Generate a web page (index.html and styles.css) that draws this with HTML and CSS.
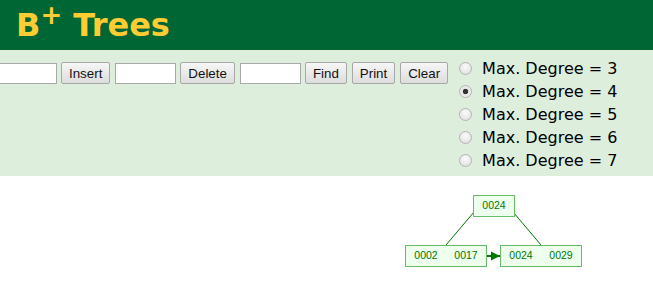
FILE: index.html
```html
<!doctype html>
<html lang="en">
<head>
	<meta charset="UTF-8">
	<title>B+ Trees</title>
	<link rel="stylesheet" href="styles.css">
</head>
<body>
<div class="header">
	<h1>B<sup>+</sup> Trees</h1>
</div>
<div class="panel">
	<div class="controls">
		<input type="text" class="field first">
		<button>Insert</button>
		<input type="text" class="field">
		<button>Delete</button>
		<input type="text" class="field">
		<button>Find</button>
		<button>Print</button>
		<button>Clear</button>
	</div>
	<div class="degrees">
		<label class="deg"><input type="radio" name="deg">Max. Degree = 3</label>
		<label class="deg"><input type="radio" name="deg" checked>Max. Degree = 4</label>
		<label class="deg"><input type="radio" name="deg">Max. Degree = 5</label>
		<label class="deg"><input type="radio" name="deg">Max. Degree = 6</label>
		<label class="deg"><input type="radio" name="deg">Max. Degree = 7</label>
	</div>
</div>
<div class="canvas">
	<svg class="tree" width="653" height="128" viewBox="0 176 653 128">
		<defs>
			<marker id="arrow" markerWidth="9" markerHeight="10" refX="9" refY="5" orient="auto" markerUnits="userSpaceOnUse">
				<path d="M0,0.5 L9,5 L0,9.5 z" fill="#007700"></path>
			</marker>
		</defs>
		<line class="edge" x1="474" y1="212" x2="446" y2="245"></line>
		<line class="edge" x1="508" y1="206" x2="541" y2="245"></line>
		<line class="edge link" x1="481" y1="256" x2="500" y2="256" marker-end="url(#arrow)"></line>

		<rect class="node" x="473.5" y="195.5" width="41" height="21"></rect>
		<text class="key" x="494" y="209">0024</text>

		<rect class="node" x="405.5" y="245.5" width="81" height="21"></rect>
		<text class="key" x="426" y="259">0002</text>
		<text class="key" x="466" y="259">0017</text>

		<rect class="node" x="500.5" y="245.5" width="81" height="21"></rect>
		<text class="key" x="521" y="259">0024</text>
		<text class="key" x="561" y="259">0029</text>
	</svg>
</div>
</body>
</html>
```

FILE: styles.css
```css
body
{
	margin: 0;
	font-family: "DejaVu Sans", Verdana, sans-serif;
	overflow: hidden;
}

.header
{
	height: 50px;
	background-color: #006633;
	display: flex;
	align-items: center;
	padding-left: 16px;
}

h1
{
	margin: 0;
	color: #ffcc33;
	font-size: 32px;
	font-weight: bold;
	line-height: 1;
}

h1 sup
{
	font-size: 26px;
	line-height: 0;
}

.panel
{
	height: 126px;
	background-color: #ddeedd;
	display: flex;
	align-items: flex-start;
}

.controls
{
	display: flex;
	align-items: center;
	gap: 4px;
	margin-top: 12px;
}

.field
{
	width: 61px;
	height: 21px;
	box-sizing: border-box;
	border: 1px solid #a9a9a9;
	background: #ffffff;
	margin: 0;
	padding: 1px 2px;
}

.field.first
{
	margin-left: -4px;
}

.controls button
{
	height: 22px;
	margin: 0 1px 0 0;
	padding: 0 7px;
	font-family: "Liberation Sans", Arial, sans-serif;
	font-size: 13.33px;
	color: #111111;
	border: 1px solid #a8a8a8;
	border-radius: 2px;
	background: linear-gradient(#f6f6f6, #dddddd);
}

.degrees
{
	display: flex;
	flex-direction: column;
	margin-left: 5px;
	padding-top: 7px;
}

.deg
{
	display: flex;
	align-items: center;
	height: 23px;
	font-size: 16px;
	color: #000000;
}

.deg input
{
	appearance: none;
	-webkit-appearance: none;
	width: 13px;
	height: 13px;
	margin: 0 10px 0 5px;
	border: 1px solid #b4b4b4;
	border-radius: 50%;
	background: radial-gradient(circle at 50% 35%, #fbfbfb, #dcdcdc);
	box-sizing: border-box;
}

.deg input:checked
{
	background: radial-gradient(circle, #333333 0, #333333 2.4px, #e4e4e4 3px, #f4f4f4 100%);
}

.tree
{
	display: block;
}

.edge
{
	stroke: #007700;
	stroke-width: 1;
}

.edge.link
{
	stroke-width: 2;
}

.node
{
	fill: #eeffee;
	stroke: #66bb66;
	stroke-width: 1;
}

.key
{
	fill: #007700;
	font-family: "Liberation Sans", Arial, sans-serif;
	font-size: 10.5px;
	text-anchor: middle;
}
```
